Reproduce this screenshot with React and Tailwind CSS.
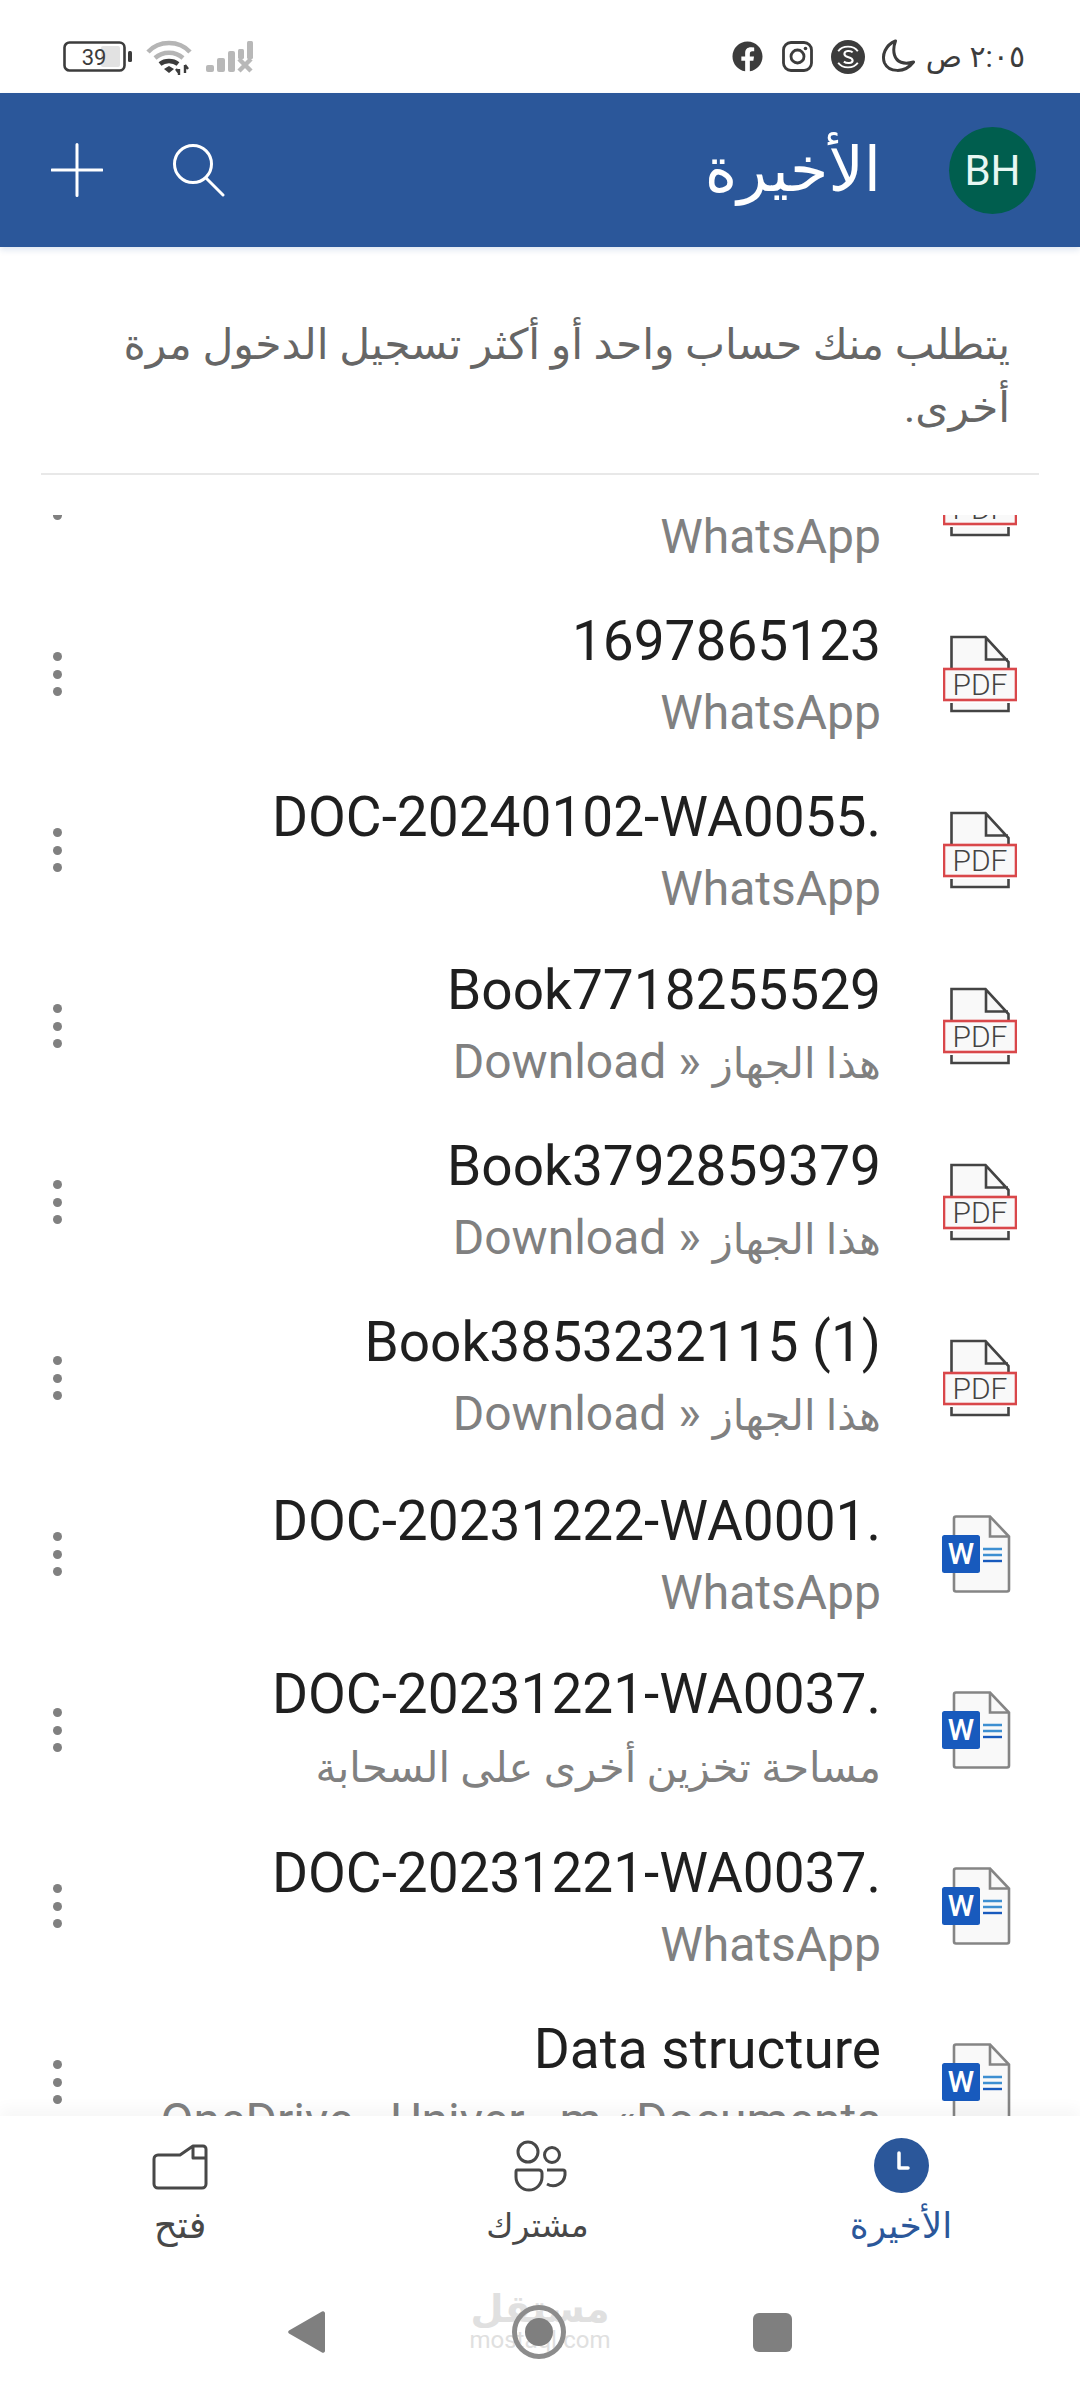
import React from "react";
import { FaFacebook } from "react-icons/fa";

const files = [
  { icon: "pdf", title: "1697865123", sub: "WhatsApp" },
  { icon: "pdf", title: "1697865123", sub: "WhatsApp" },
  { icon: "pdf", title: "DOC-20240102-WA0055.", sub: "WhatsApp" },
  { icon: "pdf", title: "Book7718255529", sub: "Download » ", subAr: "هذا الجهاز" },
  { icon: "pdf", title: "Book3792859379", sub: "Download » ", subAr: "هذا الجهاز" },
  { icon: "pdf", title: "Book3853232115 (1)", sub: "Download » ", subAr: "هذا الجهاز" },
  { icon: "word", title: "DOC-20231222-WA0001.", sub: "WhatsApp" },
  { icon: "word", title: "DOC-20231221-WA0037.", subAr: "مساحة تخزين أخرى على السحابة" },
  { icon: "word", title: "DOC-20231221-WA0037.", sub: "WhatsApp" },
  { icon: "word", title: "Data structure", sub: "OneDrive - Univer...m «Documents" },
];

function PdfIcon() {
  return (
    <svg width="74" height="78" viewBox="0 0 74 78" fill="none">
      <path d="M8.500 34V2h34l22.500 24v8M8.500 68v8.500h57V68" fill="#f9f9f9" />
      <path d="M8.500 34V2h34l23 25v7M8.500 68v8h57v-8M43 2v22.500h22" stroke="#444" strokeWidth="2.600" />
      <rect x="1" y="34" width="72" height="31" fill="#f9f9f9" stroke="#d9474a" strokeWidth="2.600" />
      <text x="37" y="60" textAnchor="middle" fontFamily="Roboto, sans-serif" fontWeight="300" fontSize="30" fill="#444">PDF</text>
    </svg>
  );
}

function WordIcon() {
  return (
    <svg className="mr-[6px]" width="70" height="78" viewBox="0 0 70 78" fill="none">
      <path d="M13 3.500a2 2 0 0 1 2-2h34l19 20v53a2 2 0 0 1-2 2H15a2 2 0 0 1-2-2z" fill="#f9f9f9" stroke="#858585" strokeWidth="2.600" />
      <path d="M49 2v19.500h19" stroke="#858585" strokeWidth="2.600" />
      <rect x="1" y="20" width="38" height="38" rx="2.500" fill="#185abd" />
      <text x="20" y="49" textAnchor="middle" fontFamily="Roboto, sans-serif" fontWeight="500" fontSize="30" fill="#fff">W</text>
      <path d="M42 34h19M42 40h19" stroke="#3d8fd1" strokeWidth="2.400" />
      <path d="M42 46h19" stroke="#185abd" strokeWidth="2.400" />
    </svg>
  );
}

function FileRow({ file }) {
  return (
    <div className="flex h-[176px] shrink-0 items-center">
      <div className="flex w-[114px] shrink-0 flex-col items-center gap-[8.500px]">
        <span className="size-[9px] rounded-full bg-[#808080]" />
        <span className="size-[9px] rounded-full bg-[#808080]" />
        <span className="size-[9px] rounded-full bg-[#808080]" />
      </div>
      <div dir="ltr" className={file.subAr ? "flex min-w-0 flex-1 flex-col items-end whitespace-nowrap pt-[2px]" : "flex min-w-0 flex-1 flex-col items-end whitespace-nowrap pt-[6px]"}>
        <div className="text-[55px] leading-[71px] text-[#1f1f1f]">{file.title}</div>
        <div className="text-[48px] leading-[71px] text-[#808080]">
          {file.sub}
          {file.subAr && <span className="text-[41.500px]">{file.subAr}</span>}
        </div>
      </div>
      <div className="flex w-[199px] shrink-0 justify-end pr-[63px]">
        {file.icon === "pdf" ? <PdfIcon /> : <WordIcon />}
      </div>
    </div>
  );
}

function StatusBar() {
  return (
    <div className="flex h-[93px] shrink-0 items-center justify-between pl-[63px] pr-[55px] pt-[20px]">
      <div className="flex items-center gap-[14px]">
        <svg width="69" height="31" viewBox="0 0 69 31" fill="none">
          <rect x="1.500" y="1.500" width="60" height="28" rx="5" stroke="#3c3c3c" strokeWidth="2.600" />
          <rect x="38" y="5" width="19" height="21" rx="2" fill="#e2e2e2" />
          <rect x="65" y="10" width="4" height="11" rx="1.500" fill="#3c3c3c" />
          <text x="31" y="23.500" textAnchor="middle" fontFamily="Roboto, sans-serif" fontSize="22" fill="#3c3c3c">39</text>
        </svg>
        <svg width="46" height="36" viewBox="0 0 46 36" fill="none">
          <path d="M2 13C13 1 33 1 44 13" stroke="#b5b5b5" strokeWidth="4.500" />
          <path d="M9 19c8-7 20-7 28 0" stroke="#b5b5b5" strokeWidth="4.500" />
          <path d="M14 25c5-4 13-4 18 0" stroke="#3c3c3c" strokeWidth="4.500" />
          <path d="M18 30l5-3 5 3-5 4z" fill="#3c3c3c" />
          <path d="M33 30v6M30 30l3 4M39 26v8M39 26l3 4" stroke="#3c3c3c" strokeWidth="2.400" />
        </svg>
        <svg width="48" height="32" viewBox="0 0 48 32" fill="none">
          <rect x="0" y="24" width="8" height="7" rx="2" fill="#b8b8b8" />
          <rect x="11" y="17" width="8" height="14" rx="2" fill="#b8b8b8" />
          <rect x="22" y="10" width="7" height="21" rx="2" fill="#b8b8b8" />
          <rect x="32" y="8" width="6" height="10" rx="1.500" fill="#b8b8b8" />
          <rect x="41" y="0" width="6" height="18" rx="1.500" fill="#b8b8b8" />
          <path d="M33 18l12 12M45 18L33 30" stroke="#b8b8b8" strokeWidth="4.500" />
        </svg>
      </div>
      <div className="flex items-center">
        <FaFacebook className="mr-[19px] text-[#3c3c3c]" size={31} />
        <svg className="mr-[18px]" width="31" height="31" viewBox="0 0 31 31" fill="none">
          <rect x="1.500" y="1.500" width="28" height="28" rx="7.500" stroke="#3c3c3c" strokeWidth="2.800" />
          <circle cx="15.500" cy="15.500" r="6.500" stroke="#3c3c3c" strokeWidth="2.800" />
          <circle cx="23.500" cy="7.500" r="1.800" fill="#3c3c3c" />
        </svg>
        <svg className="mr-[16px]" width="34" height="34" viewBox="0 0 33 33" fill="none">
          <circle cx="16.500" cy="16.500" r="16.500" fill="#3c3c3c" />
          <path d="M7 11c4-6 15-6 19 0M7 22c4 6 15 6 19 0" stroke="#fff" strokeWidth="1.800" />
          <path d="M21 12c-2-2-8-2-8 1.500 0 4 8 2.500 8 6.500 0 3-6 3-8.500 1" stroke="#fff" strokeWidth="2" />
        </svg>
        <svg className="mr-[10px]" width="35" height="35" viewBox="0 0 34 35" fill="none">
          <path d="M14 2C4 6 0 16 3 24c4 9 20 11 29-1-10 3-17 0-19-7-1.500-5-.5-10 1-14z" stroke="#3c3c3c" strokeWidth="3" strokeLinejoin="round" />
        </svg>
        <span dir="rtl" className="text-[30px] leading-none text-[#3c3c3c]">٢:٠٥ ص</span>
      </div>
    </div>
  );
}

function AppHeader() {
  return (
    <div className="flex h-[154px] shrink-0 items-center justify-between bg-[#2b579a] pl-[51px] pr-[44px] shadow-[0_3px_6px_rgba(43,87,154,0.15)]">
      <div className="flex items-center gap-[69px]">
        <svg width="52" height="54" viewBox="0 0 52 54" fill="none">
          <path d="M26 1.500v51M1 27h50" stroke="#fff" strokeWidth="3" strokeLinecap="round" />
        </svg>
        <svg width="54" height="54" viewBox="0 0 54 54" fill="none">
          <circle cx="21" cy="21" r="18.500" stroke="#fff" strokeWidth="3" />
          <path d="M34 35l17 17" stroke="#fff" strokeWidth="3" strokeLinecap="round" />
        </svg>
      </div>
      <div className="flex items-center gap-[68px]">
        <span dir="rtl" className="text-[62px] leading-none text-white">الأخيرة</span>
        <div className="flex size-[87px] items-center justify-center rounded-full bg-[#005e4e] text-[42px] text-[#e8f7f3]">
          BH
        </div>
      </div>
    </div>
  );
}

function BottomNav() {
  return (
    <div className="relative z-10 flex h-[284px] shrink-0 flex-col bg-white shadow-[0_-8px_14px_rgba(0,0,0,0.035)]">
      <div className="flex h-[140px] items-start pt-[22px]">
        <div className="flex w-[360px] flex-col items-center pt-[6px]">
          <svg width="56" height="46" viewBox="0 0 56 46" fill="none">
            <path d="M28 11L41 2h10a3 3 0 0 1 3 3v35a4 4 0 0 1-4 4H6a4 4 0 0 1-4-4V15a4 4 0 0 1 4-4h22zM41 2v12h13" stroke="#484848" strokeWidth="3" strokeLinejoin="round" />
          </svg>
          <span dir="rtl" className="mt-[16px] text-[37px] leading-[40px] text-[#484848]">فتح</span>
        </div>
        <div className="flex w-[360px] flex-col items-center pr-[5px] pt-[2px]">
          <svg width="58" height="52" viewBox="0 0 58 52" fill="none">
            <ellipse cx="19" cy="12" rx="10" ry="10" stroke="#484848" strokeWidth="3" />
            <circle cx="43" cy="15" r="7.500" stroke="#484848" strokeWidth="3" />
            <path d="M8 30h22a3 3 0 0 1 3 3v4a13 13 0 0 1-26 0v-5c0-1 0-2 1-2zM38 30h16a2 2 0 0 1 2 2v3a12 12 0 0 1-18 9" stroke="#484848" strokeWidth="3" />
          </svg>
          <span dir="rtl" className="mt-[14px] text-[33px] leading-[40px] text-[#484848]">مشترك</span>
        </div>
        <div className="flex w-[360px] flex-col items-center pl-[2px]">
          <svg width="55" height="55" viewBox="0 0 55 55" fill="none">
            <circle cx="27.500" cy="27.500" r="27.500" fill="#2b579a" />
            <path d="M25 15v15h9" stroke="#fff" strokeWidth="3.500" strokeLinecap="round" strokeLinejoin="round" />
          </svg>
          <span dir="rtl" className="mt-[13px] text-[36px] leading-[40px] text-[#2b579a]">الأخيرة</span>
        </div>
      </div>
      <div className="relative flex items-center justify-between px-[288px] pt-[49px]">
        <div className="absolute left-[474px] top-[35px] flex w-[132px] flex-col items-center text-[#e0e0e0]">
          <span dir="rtl" className="text-[38px] font-bold leading-[36px]">مستقل</span>
          <span className="text-[24px] leading-[26px]">mostaql.com</span>
        </div>
        <svg className="relative" width="37" height="46" viewBox="0 0 37 46" fill="none">
          <path d="M34 2.500a2 2 0 0 1 3 1.500v38a2 2 0 0 1-3 1.500L1 24.500a2 2 0 0 1 0-3z" fill="#7f7f7f" />
        </svg>
        <svg className="relative" width="54" height="54" viewBox="0 0 54 54" fill="none">
          <circle cx="27" cy="27" r="24.500" stroke="#8c8c8c" strokeWidth="5" />
          <circle cx="27" cy="27" r="14" fill="#7f7f7f" />
        </svg>
        <div className="relative size-[39px] rounded-[6px] bg-[#7f7f7f]" />
      </div>
    </div>
  );
}

export default function App() {
  return (
    <div className="flex h-[2400px] w-[1080px] flex-col overflow-hidden bg-white font-['Roboto','DejaVu_Sans',sans-serif]">
      <StatusBar />
      <AppHeader />
      <div className="mx-[41px] h-[228px] shrink-0 border-b-2 border-[#e8e8e8] pl-[30px] pr-[29px] pt-[66px]">
        <p dir="rtl" className="text-[42.500px] leading-[63px] text-[#666]">
          يتطلب منك حساب واحد أو أكثر تسجيل الدخول مرة أخرى.
        </p>
      </div>
      <div className="mt-[40px] min-h-0 flex-1 overflow-hidden">
        <div className="-mt-[105px] flex flex-col">
          {files.map((file, i) => (
            <FileRow key={i} file={file} />
          ))}
        </div>
      </div>
      <BottomNav />
    </div>
  );
}
